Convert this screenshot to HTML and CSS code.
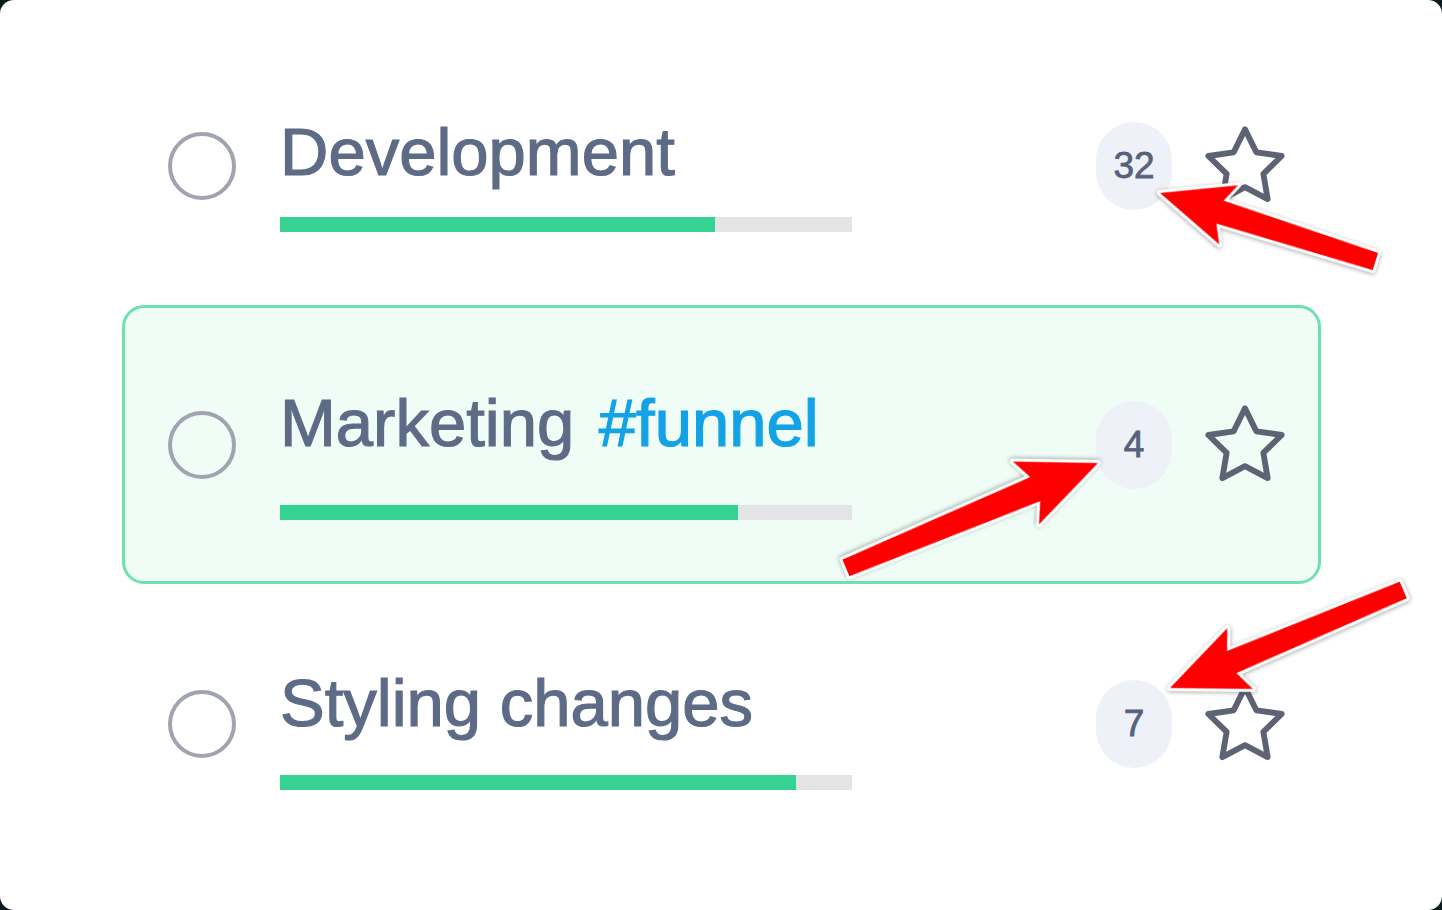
FILE: index.html
```html
<!DOCTYPE html>
<html lang="en">
<head>
<meta charset="utf-8">
<title>Projects</title>
<link rel="stylesheet" href="styles.css">
</head>
<body>
<div class="card">
  <ul class="list">
    <li class="row row--first">
      <span class="check"></span>
      <div class="main">
        <div class="title">Development</div>
        <div class="bar"><div class="fill" style="width:76%"></div></div>
      </div>
      <span class="badge">32</span>
      <svg class="star" viewBox="0 0 24 24"><polygon points="12 2 15.09 8.26 22 9.27 17 14.14 18.18 21.02 12 17.77 5.82 21.02 7 14.14 2 9.27 8.91 8.26"/></svg>
    </li>
    <li class="row row--active">
      <span class="check"></span>
      <div class="main">
        <div class="title">Marketing <span class="tag">#funnel</span></div>
        <div class="bar"><div class="fill" style="width:80%"></div></div>
      </div>
      <span class="badge">4</span>
      <svg class="star" viewBox="0 0 24 24"><polygon points="12 2 15.09 8.26 22 9.27 17 14.14 18.18 21.02 12 17.77 5.82 21.02 7 14.14 2 9.27 8.91 8.26"/></svg>
    </li>
    <li class="row">
      <span class="check"></span>
      <div class="main">
        <div class="title">Styling changes</div>
        <div class="bar"><div class="fill" style="width:90.2%"></div></div>
      </div>
      <span class="badge">7</span>
      <svg class="star" viewBox="0 0 24 24"><polygon points="12 2 15.09 8.26 22 9.27 17 14.14 18.18 21.02 12 17.77 5.82 21.02 7 14.14 2 9.27 8.91 8.26"/></svg>
    </li>
  </ul>
  <svg class="arrows" viewBox="0 0 1442 910" width="1442" height="910">
    <g class="arrow" transform="translate(1160 193) rotate(17.65)">
      <polygon points="0,0 72,-31 63,-12 226,-9 226,9 63,12 72,31"/>
    </g>
    <g class="arrow" transform="translate(1098 463) rotate(157.4)">
      <polygon points="0,0 78,-34 68,-13 273,-9 273,9 68,13 78,34"/>
    </g>
    <g class="arrow" transform="translate(1170 688) rotate(-22.8)">
      <polygon points="0,0 76,-33 67,-12 253,-9 253,9 67,12 76,33"/>
    </g>
  </svg>
</div>
</body>
</html>
```

FILE: styles.css
```css
html, body {
  margin: 0;
  padding: 0;
  background: #0b1a1e;
}

body {
  font-family: "Liberation Sans", Arial, sans-serif;
}

.card {
  position: relative;
  width: 1442px;
  height: 910px;
  background: #ffffff;
  border-radius: 14px;
  overflow: hidden;
}

.list {
  list-style: none;
  margin: 0;
  padding: 26px 0 0 122px;
  width: 1199px;
}

.row {
  display: flex;
  align-items: center;
  height: 279px;
  box-sizing: border-box;
  border: 3px solid transparent;
  border-radius: 22px;
  padding: 0 29px 0 43px;
}

.row--active {
  border-color: #6fe0b2;
  background: #effdf6;
}

.check {
  flex: none;
  width: 68px;
  height: 68px;
  box-sizing: border-box;
  border: 4px solid #a0a4b0;
  border-radius: 50%;
  margin-right: 44px;
}

.main {
  flex: none;
  width: 572px;
  margin-top: 11px;
}

.row--first .main {
  margin-top: 18px;
}

.row--active .main {
  margin-top: 19px;
}

.title {
  font-size: 67px;
  line-height: 67px;
  color: #5e6b86;
  -webkit-text-stroke: 1.2px #5e6b86;
  white-space: nowrap;
}

.tag {
  color: #13a2e6;
  -webkit-text-stroke: 1.2px #13a2e6;
  margin-left: 6px;
}

.bar {
  height: 15px;
  background: #e4e4e7;
  margin-top: 39px;
}

.row--first .bar {
  margin-top: 32px;
}

.row--active .bar {
  margin-top: 49px;
}

.fill {
  height: 100%;
  background: #35d294;
}

.badge {
  flex: none;
  margin-left: auto;
  margin-right: 29px;
  width: 76px;
  height: 88px;
  border-radius: 38px;
  background: #eef1f7;
  display: flex;
  align-items: center;
  justify-content: center;
  font-size: 37px;
  color: #56617b;
  -webkit-text-stroke: 0.8px #56617b;
}

.star {
  flex: none;
  width: 88px;
  height: 88px;
  fill: none;
  stroke: #5d6373;
  stroke-width: 1.6;
  stroke-linejoin: round;
}

.arrows {
  position: absolute;
  left: 0;
  top: 0;
  pointer-events: none;
}

.arrow polygon {
  fill: #ff0000;
  stroke: #ffffff;
  stroke-width: 6;
  stroke-linejoin: round;
  paint-order: stroke;
  filter: drop-shadow(0 1px 2px rgba(0, 0, 0, 0.35));
}
```
